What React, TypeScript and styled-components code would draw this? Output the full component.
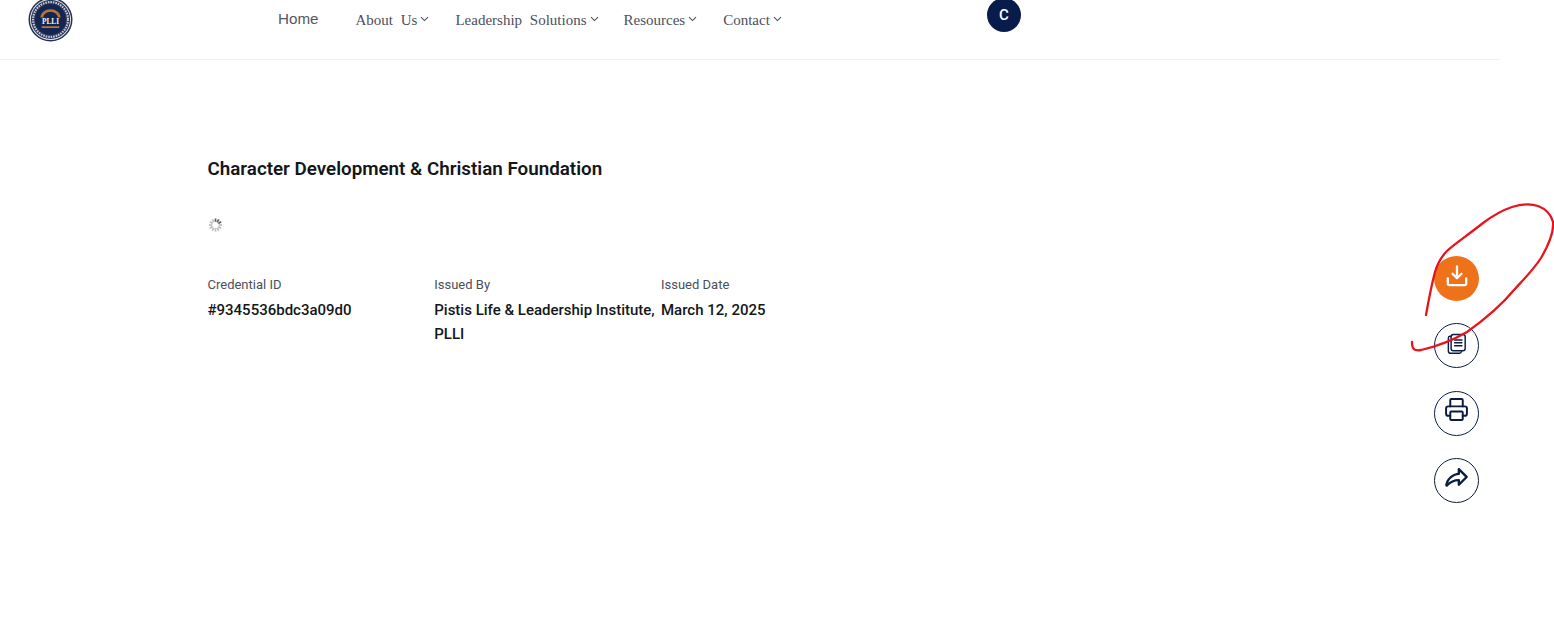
import React from "react"
import styled, { createGlobalStyle } from "styled-components"
import { Printer } from "lucide-react"
import { PiShareFatBold } from "react-icons/pi"

const navLinks = [
  { label: "About Us", gap: 37 },
  { label: "Leadership Solutions", gap: 26 },
  { label: "Resources", gap: 25 },
  { label: "Contact", gap: 26 },
]

const details = [
  { label: "Credential ID", value: "#9345536bdc3a09d0" },
  { label: "Issued By", value: "Pistis Life & Leadership Institute, PLLI" },
  { label: "Issued Date", value: "March 12, 2025" },
]

const Logo = () => (
  <LogoSvg viewBox="0 0 46 46">
    <circle cx="23" cy="23" r="22.5" fill="#26324f" />
    <circle cx="23" cy="23" r="21" fill="#e4e6ec" />
    <circle cx="23" cy="23" r="20" fill="#27345a" />
    <circle cx="23" cy="23" r="17.8" fill="none" stroke="#c9cdd8" strokeWidth="2.2" strokeDasharray="1.6 1" />
    <circle cx="23" cy="23" r="15.6" fill="#14264f" />
    <path d="M12.5 21a10.5 8.5 0 0 1 21 0h-3a7.5 6 0 0 0-15 0z" fill="#b9733a" />
    <rect x="14" y="30" width="18" height="1.6" fill="#c77f3f" />
    <text x="23" y="28" textAnchor="middle" fontSize="7.5" fontWeight="700" fontFamily="Liberation Serif, serif" fill="#f2f3f7">
      PLLI
    </text>
  </LogoSvg>
)

const Caret = () => (
  <CaretSvg viewBox="0 0 9 6">
    <path d="M1 1.2l3.5 3.4L8 1.2" />
  </CaretSvg>
)

const Spinner = () => (
  <SpinnerSvg viewBox="0 0 16 16">
    {Array.from({ length: 12 }).map((_, i) => (
      <line
        key={i}
        x1="8"
        y1="1"
        x2="8"
        y2="4.6"
        stroke={i >= 0 && i <= 2 ? "#5f5f5f" : "#bdbdbd"}
        strokeWidth="1.8"
        transform={`rotate(${i * 30} 8 8)`}
      />
    ))}
  </SpinnerSvg>
)

const DownloadIcon = () => (
  <svg width="22" height="22" viewBox="0 0 22 22" fill="none" stroke="#fff" strokeWidth="2.3" strokeLinecap="round" strokeLinejoin="round">
    <path d="M11 1.5v11.5M6.5 8.8l4.5 4.4 4.5-4.4" />
    <path d="M1.8 13.5v5a1.6 1.6 0 0 0 1.6 1.6h15.2a1.6 1.6 0 0 0 1.6-1.6v-5" />
  </svg>
)

const CopyIcon = () => (
  <svg width="20" height="22" viewBox="0 0 22 24" fill="none" stroke="#0b1c42" strokeWidth="1.6" strokeLinecap="round" strokeLinejoin="round">
    <path d="M4.5 3.5H3.2A1.9 1.9 0 0 0 1.5 5.4v14.2c0 1.4 1 2.6 2.6 2.6h9.7c1.1 0 1.9-.7 2.1-1.7" />
    <rect x="4.5" y="1.5" width="15.5" height="18" rx="2.5" />
    <path d="M8.4 7.5h8M8.4 10.7h8M8.4 13.9h8" />
  </svg>
)

// the red pen mark someone drew over the screenshot
const Scribble = () => (
  <ScribbleSvg viewBox="0 0 1554 621">
    <path d="M1426 315C1429 298 1432 283 1435 272C1438 262 1441 257 1447 251C1453 245 1468 235 1483 223C1495 214 1503 210 1512 207C1522 204 1532 204 1538 206C1546 209 1551 214 1553 222C1554 232 1548 246 1541 258C1534 269 1525 278 1514 290C1504 302 1488 317 1467 332C1450 342 1434 347 1421 350C1415 351 1412 350 1412 342" />
  </ScribbleSvg>
)

export default function App() {
  return (
    <>
      <GlobalStyle />
      <Page>
        <Header>
          <Logo />
          <Nav>
            <HomeLink>Home</HomeLink>
            {navLinks.map(link => (
              <NavItem key={link.label} $gap={link.gap}>
                {link.label}
                <Caret />
              </NavItem>
            ))}
          </Nav>
          <Avatar>C</Avatar>
        </Header>
        <Main>
          <Content>
            <Title>Character Development &amp; Christian Foundation</Title>
            <Spinner />
            <Details>
              {details.map(d => (
                <Detail key={d.label}>
                  <Label>{d.label}</Label>
                  <Value>{d.value}</Value>
                </Detail>
              ))}
            </Details>
          </Content>
          <Actions>
            <ActionButton $primary $lift={5} aria-label="Download">
              <DownloadIcon />
            </ActionButton>
            <ActionButton $lift={4} aria-label="Copy">
              <CopyIcon />
            </ActionButton>
            <ActionButton $lift={7} aria-label="Print">
              <Printer size={25} strokeWidth={1.9} />
            </ActionButton>
            <ActionButton $lift={5} aria-label="Share">
              <PiShareFatBold size={25} />
            </ActionButton>
          </Actions>
        </Main>
        <Scribble />
      </Page>
    </>
  )
}

const GlobalStyle = createGlobalStyle`
  html, body {
    margin: 0;
    padding: 0;
    background: #fff;
    overflow: hidden;
  }
  * {
    box-sizing: border-box;
  }
`
const Page = styled.div`
  position: relative;
  width: 1554px;
  height: 621px;
  overflow: hidden;
  font-family: Roboto, "Liberation Sans", sans-serif;
`
const Header = styled.header`
  display: flex;
  align-items: flex-start;
  width: 1500px;
  height: 60px;
  padding-left: 28px;
  border-bottom: 1px solid #f2f2f2;
`
const LogoSvg = styled.svg`
  width: 45px;
  height: 45px;
  margin-top: -3px;
  flex: none;
`
const Nav = styled.nav`
  display: flex;
  align-items: flex-start;
  margin-left: 205px;
  width: 709px;
  padding-top: 10px;
`
const HomeLink = styled.a`
  font-family: "Liberation Sans", Arial, sans-serif;
  font-size: 15.2px;
  line-height: 18px;
  color: #555866;
`
const NavItem = styled.a<{ $gap: number }>`
  display: flex;
  align-items: center;
  margin-left: ${props => props.$gap}px;
  margin-top: 2px;
  font-family: "Liberation Serif", "Times New Roman", serif;
  font-size: 15px;
  line-height: 17px;
  word-spacing: 4px;
  color: #4c4f5c;
`
const CaretSvg = styled.svg`
  width: 9px;
  height: 6px;
  margin-left: 3px;
  margin-top: -3px;
  fill: none;
  stroke: #4c4f5c;
  stroke-width: 1.1;
`
const Avatar = styled.div`
  display: flex;
  align-items: center;
  justify-content: center;
  width: 34px;
  height: 34px;
  margin-top: -2px;
  border-radius: 50%;
  background: #071c4a;
  color: #fff;
  font-size: 15px;
  font-weight: 500;
  flex: none;
`
const Main = styled.main`
  display: flex;
  justify-content: space-between;
  padding: 0 75px 0 207.5px;
`
const Content = styled.section`
  padding-top: 98px;
`
const Title = styled.h1`
  margin: 0 0 37px;
  font-size: 18.8px;
  line-height: 22px;
  font-weight: 600;
  color: #14161a;
`
const SpinnerSvg = styled.svg`
  display: block;
  width: 15px;
  height: 16px;
`
const Details = styled.div`
  display: grid;
  grid-template-columns: repeat(3, 226.75px);
  margin-top: 44px;
`
const Detail = styled.div`
  display: flex;
  flex-direction: column;
  gap: 6px;
`
const Label = styled.span`
  font-size: 13px;
  line-height: 15px;
  color: #4b4f58;
`
const Value = styled.span`
  font-size: 15px;
  line-height: 24px;
  font-weight: 500;
  color: #14161a;
`
const Actions = styled.aside`
  display: flex;
  flex-direction: column;
  gap: 22.5px;
  padding-top: 195.9px;
`
const ActionButton = styled.button<{ $primary?: boolean; $lift: number }>`
  display: flex;
  align-items: center;
  justify-content: center;
  width: 45px;
  height: 45px;
  padding: 0 0 ${props => props.$lift}px;
  border-radius: 50%;
  border: ${props => (props.$primary ? "none" : "1px solid #0b1c42")};
  background: ${props => (props.$primary ? "#ee7219" : "#fff")};
  color: ${props => (props.$primary ? "#fff" : "#0b1c42")};
`
const ScribbleSvg = styled.svg`
  position: absolute;
  top: 0;
  left: 0;
  width: 1554px;
  height: 621px;
  pointer-events: none;
  fill: none;
  stroke: #e8141c;
  stroke-width: 2.3;
  stroke-linecap: round;
`
